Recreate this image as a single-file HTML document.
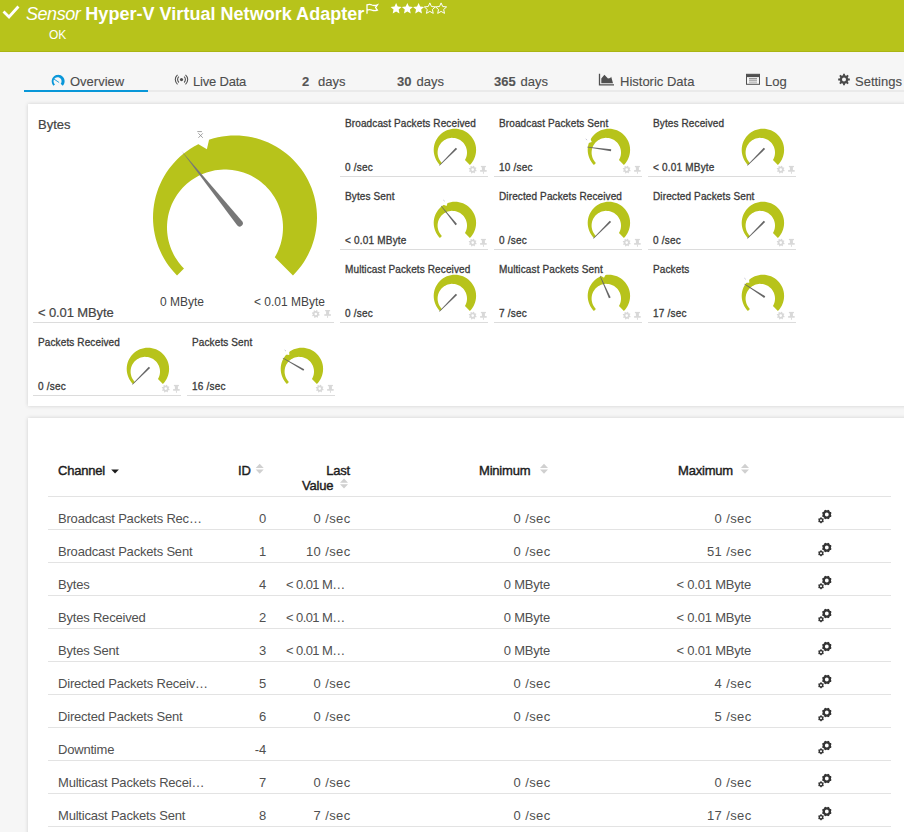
<!DOCTYPE html>
<html><head><meta charset="utf-8">
<style>
*{margin:0;padding:0;box-sizing:border-box}
html,body{width:904px;height:832px;overflow:hidden;background:#f6f6f6;font-family:"Liberation Sans",sans-serif;color:#4a4a4a}
.abs{position:absolute}
#hdr{position:absolute;left:0;top:0;width:904px;height:52px;background:#b7c31b;border-bottom:1px solid #aab514}
#hdr .t{position:absolute;left:26px;top:3px;font-size:18px;color:#fff;white-space:nowrap;line-height:22px}
#hdr .t i{font-style:italic;font-weight:normal;font-size:18px;letter-spacing:-0.45px}
#hdr .t b{font-weight:bold;margin-left:5px;letter-spacing:0.03px}
#hdr .ok{position:absolute;left:49px;top:28px;font-size:12px;color:#fff;line-height:14px}
.tab{position:absolute;top:74px;font-size:13px;color:#4d4d4d;-webkit-text-stroke:0.12px #4d4d4d;line-height:15px;white-space:nowrap}
.tab b{font-weight:bold;color:#555}
#tabline{position:absolute;left:24px;top:90px;width:880px;height:2px;background:#eaeaea}
#tabsel{position:absolute;left:24px;top:90px;width:124px;height:2px;background:#0897d8}
.panel{position:absolute;left:28px;background:#fff;box-shadow:0 0 4px rgba(0,0,0,0.16)}
.gt{position:absolute;font-size:10px;font-weight:normal;-webkit-text-stroke:0.3px #3a3a3a;letter-spacing:0.12px;color:#3a3a3a;line-height:12px;white-space:nowrap}
.gv{position:absolute;font-size:10px;font-weight:normal;-webkit-text-stroke:0.3px #3a3a3a;letter-spacing:0.2px;color:#3a3a3a;line-height:12px;white-space:nowrap}
.th{position:absolute;font-size:13px;font-weight:normal;-webkit-text-stroke:0.4px #1c1c1c;color:#1c1c1c;line-height:15px;white-space:nowrap;letter-spacing:-0.2px}
.td{position:absolute;font-size:13px;color:#505050;line-height:15px;white-space:nowrap;letter-spacing:-0.2px}
.r{text-align:right}
.hl{position:absolute;left:48px;width:843px;height:1px;background:#e3e3e3}
</style></head><body>
<div id="hdr">
 <svg class="abs" style="left:0;top:0" width="904" height="52">
  <path d="M4.5 12.5 L9 17 L17.5 7.5" fill="none" stroke="#fff" stroke-width="2.8" stroke-linecap="square"/>
  <g fill="none" stroke="#fff" stroke-width="1.3">
   <path d="M367 13.8 V4.2 M367 4.9 Q369.8 3.9 372 5 Q374.5 6 377.4 4.9 L375.6 7.6 L377.4 10.1 Q374.5 11.1 372 10.1 Q369.8 9.1 367 10.1"/>
  </g>
  <polygon points="396.10,2.90 394.51,6.52 390.58,6.91 393.53,9.53 392.69,13.39 396.10,11.40 399.51,13.39 398.67,9.53 401.62,6.91 397.69,6.52" fill="#fff"/><polygon points="407.35,2.90 405.76,6.52 401.83,6.91 404.78,9.53 403.94,13.39 407.35,11.40 410.76,13.39 409.92,9.53 412.87,6.91 408.94,6.52" fill="#fff"/><polygon points="418.60,2.90 417.01,6.52 413.08,6.91 416.03,9.53 415.19,13.39 418.60,11.40 422.01,13.39 421.17,9.53 424.12,6.91 420.19,6.52" fill="#fff"/><polygon points="429.85,2.90 428.26,6.52 424.33,6.91 427.28,9.53 426.44,13.39 429.85,11.40 433.26,13.39 432.42,9.53 435.37,6.91 431.44,6.52" fill="none" stroke="#fff" stroke-width="1"/><polygon points="441.10,2.90 439.51,6.52 435.58,6.91 438.53,9.53 437.69,13.39 441.10,11.40 444.51,13.39 443.67,9.53 446.62,6.91 442.69,6.52" fill="none" stroke="#fff" stroke-width="1"/>
 </svg>
 <div class="t"><i>Sensor</i><b>Hyper-V Virtual Network Adapter</b></div>
 <div class="ok">OK</div>
</div>
<div id="tabline"></div><div id="tabsel"></div>
<svg class="abs" style="left:0;top:60px" width="904" height="32">
<g transform="translate(0,-60)">
<path d="M53.59 85.81 L52.93 85.04 L52.40 84.18 L52.02 83.24 L51.78 82.26 L51.70 81.25 L51.78 80.24 L52.02 79.26 L52.40 78.32 L52.93 77.46 L53.59 76.69 L54.36 76.03 L55.22 75.50 L56.16 75.12 L57.14 74.88 L58.15 74.80 L59.16 74.88 L60.14 75.12 L61.08 75.50 L61.94 76.03 L62.71 76.69 L63.37 77.46 L63.90 78.32 L64.28 79.26 L64.52 80.24 L64.60 81.25 L64.52 82.26 L64.28 83.24 L63.90 84.18 L63.37 85.04 L62.71 85.81 L60.66 83.76 L61.02 83.24 L61.29 82.68 L61.46 82.08 L61.54 81.45 L61.53 80.83 L61.41 80.21 L61.20 79.62 L60.90 79.07 L60.52 78.57 L60.06 78.14 L59.54 77.78 L58.98 77.51 L58.38 77.34 L57.75 77.26 L57.13 77.27 L56.51 77.39 L55.92 77.60 L55.37 77.90 L54.87 78.28 L54.44 78.74 L54.08 79.26 L53.81 79.82 L53.64 80.42 L53.56 81.05 L53.57 81.67 L53.69 82.29 L53.90 82.88 L54.20 83.43 L54.58 83.93 L55.04 84.36 Z" fill="#0a97d9"/>
<line x1="54.2" y1="79.2" x2="58.8" y2="82.3" stroke="#0a97d9" stroke-width="0.9" stroke-linecap="round"/>
<circle cx="181.5" cy="79.6" r="1.6" fill="#505050"/>
<g fill="none" stroke="#505050" stroke-width="1.1"><path d="M178.89 76.70 A3.90 3.90 0 0 0 178.89 82.50"/><path d="M184.11 76.70 A3.90 3.90 0 0 1 184.11 82.50"/><path d="M177.51 74.85 A6.20 6.20 0 0 0 177.51 84.35"/><path d="M185.49 74.85 A6.20 6.20 0 0 1 185.49 84.35"/></g>
<path d="M599.5 73.8 V84.9 H614" fill="none" stroke="#505050" stroke-width="1.3"/>
<path d="M601.3 83.2 V78.5 L604.4 74.8 L608 78.5 L610.2 78 L611.2 76.8 L613 83.2 Z" fill="#505050"/>
<rect x="746.5" y="74.3" width="13" height="10" fill="none" stroke="#505050" stroke-width="1"/>
<rect x="746.5" y="74.3" width="13" height="2.8" fill="#505050"/>
<rect x="749" y="78.3" width="8" height="1" fill="#707070"/>
<rect x="749" y="80.3" width="8" height="1" fill="#909090"/>
<rect x="749" y="82.3" width="8" height="1" fill="#b0b0b0"/>

<path d="M842.33 75.47 L843.08 75.23 L843.08 73.67 L844.92 73.67 L844.92 75.23 L845.67 75.47 L846.37 75.83 L847.47 74.73 L848.77 76.03 L847.67 77.13 L848.03 77.83 L848.27 78.58 L849.83 78.58 L849.83 80.42 L848.27 80.42 L848.03 81.17 L847.67 81.87 L848.77 82.97 L847.47 84.27 L846.37 83.17 L845.67 83.53 L844.92 83.77 L844.92 85.33 L843.08 85.33 L843.08 83.77 L842.33 83.53 L841.63 83.17 L840.53 84.27 L839.23 82.97 L840.33 81.87 L839.97 81.17 L839.73 80.42 L838.17 80.42 L838.17 78.58 L839.73 78.58 L839.97 77.83 L840.33 77.13 L839.23 76.03 L840.53 74.73 L841.63 75.83 Z M844.00 79.50 m-2.00 0 a2.00 2.00 0 1 0 4.00 0 a2.00 2.00 0 1 0 -4.00 0Z" fill="#4a4a4a" fill-rule="evenodd"/></g></svg>
<div class="tab" style="left:70px">Overview</div>
<div class="tab" style="left:193px;letter-spacing:-0.2px">Live Data</div>
<div class="tab" style="left:302px"><b>2</b></div><div class="tab" style="left:318px">days</div>
<div class="tab" style="left:397px"><b>30</b></div><div class="tab" style="left:416.5px">days</div>
<div class="tab" style="left:494px"><b>365</b></div><div class="tab" style="left:520.5px">days</div>
<div class="tab" style="left:620px">Historic Data</div>
<div class="tab" style="left:765px">Log</div>
<div class="tab" style="left:855px">Settings</div>

<div class="panel" style="top:104px;width:900px;height:302px"></div>
<div class="panel" style="top:418px;width:900px;height:440px"></div>

<svg class="abs" style="left:0;top:0" width="904" height="832">
<path d="M177.02 275.48 L174.06 272.37 L171.27 269.10 L168.66 265.70 L166.23 262.16 L163.99 258.50 L161.94 254.73 L160.09 250.85 L158.45 246.89 L157.01 242.84 L155.79 238.72 L154.79 234.55 L154.01 230.33 L153.45 226.07 L153.11 221.79 L153.00 217.50 L153.11 213.21 L153.45 208.93 L154.01 204.67 L154.79 200.45 L155.79 196.28 L157.01 192.16 L158.45 188.11 L160.09 184.15 L161.94 180.27 L163.99 176.50 L166.23 172.84 L168.66 169.30 L171.27 165.90 L174.06 162.63 L177.02 159.52 L180.13 156.56 L183.40 153.77 L186.80 151.16 L190.34 148.73 L194.00 146.49 L197.77 144.44 L201.65 142.59 L205.61 140.95 L209.66 139.51 L213.78 138.29 L217.95 137.29 L222.17 136.51 L226.43 135.95 L230.71 135.61 L235.00 135.50 L239.29 135.61 L243.57 135.95 L247.83 136.51 L252.05 137.29 L256.22 138.29 L260.34 139.51 L264.39 140.95 L268.35 142.59 L272.23 144.44 L276.00 146.49 L279.66 148.73 L283.20 151.16 L286.60 153.77 L289.87 156.56 L292.98 159.52 L295.94 162.63 L298.73 165.90 L301.34 169.30 L303.77 172.84 L306.01 176.50 L308.06 180.27 L309.91 184.15 L311.55 188.11 L312.99 192.16 L314.21 196.28 L315.21 200.45 L315.99 204.67 L316.55 208.93 L316.89 213.21 L317.00 217.50 L316.89 221.79 L316.55 226.07 L315.99 230.33 L315.21 234.55 L314.21 238.72 L312.99 242.84 L311.55 246.89 L309.91 250.85 L308.06 254.73 L306.01 258.50 L303.77 262.16 L301.34 265.70 L298.73 269.10 L295.94 272.37 L292.98 275.48 L274.77 257.27 L276.19 254.77 L277.48 252.20 L278.64 249.56 L279.67 246.87 L280.56 244.14 L281.32 241.36 L281.94 238.55 L282.42 235.71 L282.75 232.86 L282.95 229.98 L283.00 227.11 L282.91 224.23 L282.67 221.36 L282.30 218.51 L281.78 215.68 L281.13 212.88 L280.33 210.11 L279.40 207.39 L278.34 204.71 L277.14 202.10 L275.82 199.54 L274.37 197.05 L272.80 194.64 L271.11 192.31 L269.31 190.07 L267.39 187.92 L265.38 185.86 L263.26 183.91 L261.05 182.07 L258.76 180.34 L256.38 178.72 L253.92 177.22 L251.39 175.85 L248.79 174.60 L246.14 173.49 L243.43 172.51 L240.68 171.66 L237.90 170.95 L235.07 170.38 L232.23 169.95 L229.37 169.66 L226.49 169.52 L223.61 169.52 L220.74 169.66 L217.87 169.94 L215.03 170.36 L212.21 170.93 L209.42 171.63 L206.66 172.47 L203.96 173.45 L201.30 174.56 L198.71 175.80 L196.17 177.17 L193.71 178.66 L191.33 180.27 L189.03 182.00 L186.82 183.84 L184.70 185.79 L182.68 187.84 L180.76 189.99 L178.96 192.23 L177.26 194.56 L175.69 196.97 L174.23 199.45 L172.91 202.00 L171.70 204.62 L170.64 207.29 L169.70 210.01 L168.90 212.78 L168.24 215.58 L167.72 218.41 L167.34 221.26 L167.10 224.13 L167.00 227.00 L167.05 229.88 L167.24 232.75 L167.57 235.61 L168.04 238.45 L168.66 241.26 L169.41 244.04 L170.30 246.78 L171.32 249.47 L172.48 252.10 L173.76 254.68 L175.17 257.18 L176.71 259.62 L178.36 261.98 L180.13 264.25 L182.00 266.43 L183.99 268.51 Z" fill="#b7c31b"/>
<polygon points="198.5,144.2 206.9,149.2 209.1,139.6 209.5,130 198,130" fill="#fff"/>
<line x1="197.3" y1="131.6" x2="201.9" y2="131.6" stroke="#8a8a8a" stroke-width="0.8"/><path d="M198.4 133.3 L202.8 137.8 M202.8 133.3 L198.4 137.8" stroke="#8a8a8a" stroke-width="0.8"/>
<path d="M181.23 150.38 L242.12 221.27 A3.20 3.20 0 0 1 237.13 225.28 Z" fill="#777777"/>
<path d="M439.91 164.94 L438.51 163.40 L437.27 161.73 L436.20 159.94 L435.31 158.06 L434.61 156.10 L434.11 154.09 L433.80 152.03 L433.70 149.95 L433.80 147.87 L434.11 145.81 L434.61 143.80 L435.31 141.84 L436.20 139.96 L437.27 138.17 L438.51 136.50 L439.91 134.96 L441.45 133.56 L443.12 132.32 L444.91 131.25 L446.79 130.36 L448.75 129.66 L450.76 129.16 L452.82 128.85 L454.90 128.75 L456.98 128.85 L459.04 129.16 L461.05 129.66 L463.01 130.36 L464.89 131.25 L466.68 132.32 L468.35 133.56 L469.89 134.96 L471.29 136.50 L472.53 138.17 L473.60 139.96 L474.49 141.84 L475.19 143.80 L475.69 145.81 L476.00 147.87 L476.10 149.95 L476.00 152.03 L475.69 154.09 L475.19 156.10 L474.49 158.06 L473.60 159.94 L472.53 161.73 L471.29 163.40 L469.89 164.94 L464.96 160.01 L465.60 158.81 L466.13 157.55 L466.53 156.24 L466.81 154.91 L466.97 153.55 L467.00 152.18 L466.90 150.82 L466.67 149.48 L466.33 148.16 L465.86 146.87 L465.27 145.64 L464.58 144.47 L463.77 143.36 L462.87 142.34 L461.88 141.40 L460.80 140.56 L459.65 139.82 L458.44 139.19 L457.18 138.68 L455.87 138.29 L454.53 138.02 L453.17 137.88 L451.81 137.86 L450.45 137.97 L449.10 138.20 L447.78 138.56 L446.51 139.04 L445.28 139.64 L444.11 140.34 L443.01 141.16 L442.00 142.07 L441.07 143.07 L440.24 144.15 L439.51 145.31 L438.89 146.52 L438.39 147.79 L438.01 149.10 L437.75 150.45 L437.62 151.80 L437.61 153.17 L437.73 154.53 L437.98 155.87 L438.35 157.19 L438.84 158.46 L439.45 159.68 L440.16 160.85 L440.99 161.94 L441.91 162.94 Z" fill="#b7c31b"/>
<polygon points="439.17,165.33 455.78,147.72 457.13,149.07 439.52,165.68" fill="#666666"/>
<path d="M475.70 169.60 L476.62 170.38 L476.40 171.13 L475.19 171.27 L474.82 171.72 L474.92 172.93 L474.23 173.30 L473.29 172.54 L472.70 172.60 L471.92 173.52 L471.17 173.30 L471.03 172.09 L470.58 171.72 L469.37 171.82 L469.00 171.13 L469.76 170.19 L469.70 169.60 L468.78 168.82 L469.00 168.07 L470.21 167.93 L470.58 167.48 L470.48 166.27 L471.17 165.90 L472.11 166.66 L472.70 166.60 L473.48 165.68 L474.23 165.90 L474.37 167.11 L474.82 167.48 L476.03 167.38 L476.40 168.07 L475.64 169.01 Z M472.70 169.60 m-1.3 0 a1.3 1.3 0 1 0 2.6 0 a1.3 1.3 0 1 0 -2.6 0Z" fill="#d8d8d8" fill-rule="evenodd"/>
<g fill="#d8d8d8"><rect x="480.90" y="165.90" width="5" height="1.3"/><rect x="481.90" y="166.90" width="3" height="4"/><rect x="480.10" y="170.10" width="6.6" height="1.6"/><rect x="482.95" y="171.50" width="0.9" height="2.3"/></g>
<rect x="340" y="176" width="148" height="1" fill="#dcdcdc"/>
<path d="M593.91 164.94 L592.51 163.40 L591.27 161.73 L590.20 159.94 L589.31 158.06 L588.61 156.10 L588.11 154.09 L587.80 152.03 L587.70 149.95 L587.80 147.87 L588.11 145.81 L588.61 143.80 L589.31 141.84 L590.20 139.96 L591.27 138.17 L592.51 136.50 L593.91 134.96 L595.45 133.56 L597.12 132.32 L598.91 131.25 L600.79 130.36 L602.75 129.66 L604.76 129.16 L606.82 128.85 L608.90 128.75 L610.98 128.85 L613.04 129.16 L615.05 129.66 L617.01 130.36 L618.89 131.25 L620.68 132.32 L622.35 133.56 L623.89 134.96 L625.29 136.50 L626.53 138.17 L627.60 139.96 L628.49 141.84 L629.19 143.80 L629.69 145.81 L630.00 147.87 L630.10 149.95 L630.00 152.03 L629.69 154.09 L629.19 156.10 L628.49 158.06 L627.60 159.94 L626.53 161.73 L625.29 163.40 L623.89 164.94 L618.96 160.01 L619.60 158.81 L620.13 157.55 L620.53 156.24 L620.81 154.91 L620.97 153.55 L621.00 152.18 L620.90 150.82 L620.67 149.48 L620.33 148.16 L619.86 146.87 L619.27 145.64 L618.58 144.47 L617.77 143.36 L616.87 142.34 L615.88 141.40 L614.80 140.56 L613.65 139.82 L612.44 139.19 L611.18 138.68 L609.87 138.29 L608.53 138.02 L607.17 137.88 L605.81 137.86 L604.45 137.97 L603.10 138.20 L601.78 138.56 L600.51 139.04 L599.28 139.64 L598.11 140.34 L597.01 141.16 L596.00 142.07 L595.07 143.07 L594.24 144.15 L593.51 145.31 L592.89 146.52 L592.39 147.79 L592.01 149.10 L591.75 150.45 L591.62 151.80 L591.61 153.17 L591.73 154.53 L591.98 155.87 L592.35 157.19 L592.84 158.46 L593.45 159.68 L594.16 160.85 L594.99 161.94 L595.91 162.94 Z" fill="#b7c31b"/>
<polygon points="588.57,142.95 591.77,141.96 590.47,138.88 588.16,137.49 586.02,142.07" fill="#fff"/>
<path d="M585.72 138.87 l1.4 1.2" stroke="#b8b8c8" stroke-width="0.8"/>
<polygon points="587.12,146.83 611.21,149.30 610.96,151.18 587.06,147.33" fill="#666666"/>
<path d="M629.70 169.60 L630.62 170.38 L630.40 171.13 L629.19 171.27 L628.82 171.72 L628.92 172.93 L628.23 173.30 L627.29 172.54 L626.70 172.60 L625.92 173.52 L625.17 173.30 L625.03 172.09 L624.58 171.72 L623.37 171.82 L623.00 171.13 L623.76 170.19 L623.70 169.60 L622.78 168.82 L623.00 168.07 L624.21 167.93 L624.58 167.48 L624.48 166.27 L625.17 165.90 L626.11 166.66 L626.70 166.60 L627.48 165.68 L628.23 165.90 L628.37 167.11 L628.82 167.48 L630.03 167.38 L630.40 168.07 L629.64 169.01 Z M626.70 169.60 m-1.3 0 a1.3 1.3 0 1 0 2.6 0 a1.3 1.3 0 1 0 -2.6 0Z" fill="#d8d8d8" fill-rule="evenodd"/>
<g fill="#d8d8d8"><rect x="634.90" y="165.90" width="5" height="1.3"/><rect x="635.90" y="166.90" width="3" height="4"/><rect x="634.10" y="170.10" width="6.6" height="1.6"/><rect x="636.95" y="171.50" width="0.9" height="2.3"/></g>
<rect x="494" y="176" width="148" height="1" fill="#dcdcdc"/>
<path d="M747.91 164.94 L746.51 163.40 L745.27 161.73 L744.20 159.94 L743.31 158.06 L742.61 156.10 L742.11 154.09 L741.80 152.03 L741.70 149.95 L741.80 147.87 L742.11 145.81 L742.61 143.80 L743.31 141.84 L744.20 139.96 L745.27 138.17 L746.51 136.50 L747.91 134.96 L749.45 133.56 L751.12 132.32 L752.91 131.25 L754.79 130.36 L756.75 129.66 L758.76 129.16 L760.82 128.85 L762.90 128.75 L764.98 128.85 L767.04 129.16 L769.05 129.66 L771.01 130.36 L772.89 131.25 L774.68 132.32 L776.35 133.56 L777.89 134.96 L779.29 136.50 L780.53 138.17 L781.60 139.96 L782.49 141.84 L783.19 143.80 L783.69 145.81 L784.00 147.87 L784.10 149.95 L784.00 152.03 L783.69 154.09 L783.19 156.10 L782.49 158.06 L781.60 159.94 L780.53 161.73 L779.29 163.40 L777.89 164.94 L772.96 160.01 L773.60 158.81 L774.13 157.55 L774.53 156.24 L774.81 154.91 L774.97 153.55 L775.00 152.18 L774.90 150.82 L774.67 149.48 L774.33 148.16 L773.86 146.87 L773.27 145.64 L772.58 144.47 L771.77 143.36 L770.87 142.34 L769.88 141.40 L768.80 140.56 L767.65 139.82 L766.44 139.19 L765.18 138.68 L763.87 138.29 L762.53 138.02 L761.17 137.88 L759.81 137.86 L758.45 137.97 L757.10 138.20 L755.78 138.56 L754.51 139.04 L753.28 139.64 L752.11 140.34 L751.01 141.16 L750.00 142.07 L749.07 143.07 L748.24 144.15 L747.51 145.31 L746.89 146.52 L746.39 147.79 L746.01 149.10 L745.75 150.45 L745.62 151.80 L745.61 153.17 L745.73 154.53 L745.98 155.87 L746.35 157.19 L746.84 158.46 L747.45 159.68 L748.16 160.85 L748.99 161.94 L749.91 162.94 Z" fill="#b7c31b"/>
<polygon points="747.17,165.33 763.78,147.72 765.13,149.07 747.52,165.68" fill="#666666"/>
<path d="M783.70 169.60 L784.62 170.38 L784.40 171.13 L783.19 171.27 L782.82 171.72 L782.92 172.93 L782.23 173.30 L781.29 172.54 L780.70 172.60 L779.92 173.52 L779.17 173.30 L779.03 172.09 L778.58 171.72 L777.37 171.82 L777.00 171.13 L777.76 170.19 L777.70 169.60 L776.78 168.82 L777.00 168.07 L778.21 167.93 L778.58 167.48 L778.48 166.27 L779.17 165.90 L780.11 166.66 L780.70 166.60 L781.48 165.68 L782.23 165.90 L782.37 167.11 L782.82 167.48 L784.03 167.38 L784.40 168.07 L783.64 169.01 Z M780.70 169.60 m-1.3 0 a1.3 1.3 0 1 0 2.6 0 a1.3 1.3 0 1 0 -2.6 0Z" fill="#d8d8d8" fill-rule="evenodd"/>
<g fill="#d8d8d8"><rect x="788.90" y="165.90" width="5" height="1.3"/><rect x="789.90" y="166.90" width="3" height="4"/><rect x="788.10" y="170.10" width="6.6" height="1.6"/><rect x="790.95" y="171.50" width="0.9" height="2.3"/></g>
<rect x="648" y="176" width="148" height="1" fill="#dcdcdc"/>
<path d="M439.91 237.94 L438.51 236.40 L437.27 234.73 L436.20 232.94 L435.31 231.06 L434.61 229.10 L434.11 227.09 L433.80 225.03 L433.70 222.95 L433.80 220.87 L434.11 218.81 L434.61 216.80 L435.31 214.84 L436.20 212.96 L437.27 211.17 L438.51 209.50 L439.91 207.96 L441.45 206.56 L443.12 205.32 L444.91 204.25 L446.79 203.36 L448.75 202.66 L450.76 202.16 L452.82 201.85 L454.90 201.75 L456.98 201.85 L459.04 202.16 L461.05 202.66 L463.01 203.36 L464.89 204.25 L466.68 205.32 L468.35 206.56 L469.89 207.96 L471.29 209.50 L472.53 211.17 L473.60 212.96 L474.49 214.84 L475.19 216.80 L475.69 218.81 L476.00 220.87 L476.10 222.95 L476.00 225.03 L475.69 227.09 L475.19 229.10 L474.49 231.06 L473.60 232.94 L472.53 234.73 L471.29 236.40 L469.89 237.94 L464.96 233.01 L465.60 231.81 L466.13 230.55 L466.53 229.24 L466.81 227.91 L466.97 226.55 L467.00 225.18 L466.90 223.82 L466.67 222.48 L466.33 221.16 L465.86 219.87 L465.27 218.64 L464.58 217.47 L463.77 216.36 L462.87 215.34 L461.88 214.40 L460.80 213.56 L459.65 212.82 L458.44 212.19 L457.18 211.68 L455.87 211.29 L454.53 211.02 L453.17 210.88 L451.81 210.86 L450.45 210.97 L449.10 211.20 L447.78 211.56 L446.51 212.04 L445.28 212.64 L444.11 213.34 L443.01 214.16 L442.00 215.07 L441.07 216.07 L440.24 217.15 L439.51 218.31 L438.89 219.52 L438.39 220.79 L438.01 222.10 L437.75 223.45 L437.62 224.80 L437.61 226.17 L437.73 227.53 L437.98 228.87 L438.35 230.19 L438.84 231.46 L439.45 232.68 L440.16 233.85 L440.99 234.94 L441.91 235.94 Z" fill="#b7c31b"/>
<polygon points="443.51,204.72 446.61,205.96 447.55,202.75 446.62,200.21 442.08,202.43" fill="#fff"/>
<path d="M443.33 200.06 l1.4 1.2" stroke="#b8b8c8" stroke-width="0.8"/>
<polygon points="441.28,205.67 457.02,224.07 455.54,225.26 440.89,205.99" fill="#666666"/>
<path d="M475.70 242.60 L476.62 243.38 L476.40 244.13 L475.19 244.27 L474.82 244.72 L474.92 245.93 L474.23 246.30 L473.29 245.54 L472.70 245.60 L471.92 246.52 L471.17 246.30 L471.03 245.09 L470.58 244.72 L469.37 244.82 L469.00 244.13 L469.76 243.19 L469.70 242.60 L468.78 241.82 L469.00 241.07 L470.21 240.93 L470.58 240.48 L470.48 239.27 L471.17 238.90 L472.11 239.66 L472.70 239.60 L473.48 238.68 L474.23 238.90 L474.37 240.11 L474.82 240.48 L476.03 240.38 L476.40 241.07 L475.64 242.01 Z M472.70 242.60 m-1.3 0 a1.3 1.3 0 1 0 2.6 0 a1.3 1.3 0 1 0 -2.6 0Z" fill="#d8d8d8" fill-rule="evenodd"/>
<g fill="#d8d8d8"><rect x="480.90" y="238.90" width="5" height="1.3"/><rect x="481.90" y="239.90" width="3" height="4"/><rect x="480.10" y="243.10" width="6.6" height="1.6"/><rect x="482.95" y="244.50" width="0.9" height="2.3"/></g>
<rect x="340" y="249" width="148" height="1" fill="#dcdcdc"/>
<path d="M593.91 237.94 L592.51 236.40 L591.27 234.73 L590.20 232.94 L589.31 231.06 L588.61 229.10 L588.11 227.09 L587.80 225.03 L587.70 222.95 L587.80 220.87 L588.11 218.81 L588.61 216.80 L589.31 214.84 L590.20 212.96 L591.27 211.17 L592.51 209.50 L593.91 207.96 L595.45 206.56 L597.12 205.32 L598.91 204.25 L600.79 203.36 L602.75 202.66 L604.76 202.16 L606.82 201.85 L608.90 201.75 L610.98 201.85 L613.04 202.16 L615.05 202.66 L617.01 203.36 L618.89 204.25 L620.68 205.32 L622.35 206.56 L623.89 207.96 L625.29 209.50 L626.53 211.17 L627.60 212.96 L628.49 214.84 L629.19 216.80 L629.69 218.81 L630.00 220.87 L630.10 222.95 L630.00 225.03 L629.69 227.09 L629.19 229.10 L628.49 231.06 L627.60 232.94 L626.53 234.73 L625.29 236.40 L623.89 237.94 L618.96 233.01 L619.60 231.81 L620.13 230.55 L620.53 229.24 L620.81 227.91 L620.97 226.55 L621.00 225.18 L620.90 223.82 L620.67 222.48 L620.33 221.16 L619.86 219.87 L619.27 218.64 L618.58 217.47 L617.77 216.36 L616.87 215.34 L615.88 214.40 L614.80 213.56 L613.65 212.82 L612.44 212.19 L611.18 211.68 L609.87 211.29 L608.53 211.02 L607.17 210.88 L605.81 210.86 L604.45 210.97 L603.10 211.20 L601.78 211.56 L600.51 212.04 L599.28 212.64 L598.11 213.34 L597.01 214.16 L596.00 215.07 L595.07 216.07 L594.24 217.15 L593.51 218.31 L592.89 219.52 L592.39 220.79 L592.01 222.10 L591.75 223.45 L591.62 224.80 L591.61 226.17 L591.73 227.53 L591.98 228.87 L592.35 230.19 L592.84 231.46 L593.45 232.68 L594.16 233.85 L594.99 234.94 L595.91 235.94 Z" fill="#b7c31b"/>
<polygon points="593.17,238.33 609.78,220.72 611.13,222.07 593.52,238.68" fill="#666666"/>
<path d="M629.70 242.60 L630.62 243.38 L630.40 244.13 L629.19 244.27 L628.82 244.72 L628.92 245.93 L628.23 246.30 L627.29 245.54 L626.70 245.60 L625.92 246.52 L625.17 246.30 L625.03 245.09 L624.58 244.72 L623.37 244.82 L623.00 244.13 L623.76 243.19 L623.70 242.60 L622.78 241.82 L623.00 241.07 L624.21 240.93 L624.58 240.48 L624.48 239.27 L625.17 238.90 L626.11 239.66 L626.70 239.60 L627.48 238.68 L628.23 238.90 L628.37 240.11 L628.82 240.48 L630.03 240.38 L630.40 241.07 L629.64 242.01 Z M626.70 242.60 m-1.3 0 a1.3 1.3 0 1 0 2.6 0 a1.3 1.3 0 1 0 -2.6 0Z" fill="#d8d8d8" fill-rule="evenodd"/>
<g fill="#d8d8d8"><rect x="634.90" y="238.90" width="5" height="1.3"/><rect x="635.90" y="239.90" width="3" height="4"/><rect x="634.10" y="243.10" width="6.6" height="1.6"/><rect x="636.95" y="244.50" width="0.9" height="2.3"/></g>
<rect x="494" y="249" width="148" height="1" fill="#dcdcdc"/>
<path d="M747.91 237.94 L746.51 236.40 L745.27 234.73 L744.20 232.94 L743.31 231.06 L742.61 229.10 L742.11 227.09 L741.80 225.03 L741.70 222.95 L741.80 220.87 L742.11 218.81 L742.61 216.80 L743.31 214.84 L744.20 212.96 L745.27 211.17 L746.51 209.50 L747.91 207.96 L749.45 206.56 L751.12 205.32 L752.91 204.25 L754.79 203.36 L756.75 202.66 L758.76 202.16 L760.82 201.85 L762.90 201.75 L764.98 201.85 L767.04 202.16 L769.05 202.66 L771.01 203.36 L772.89 204.25 L774.68 205.32 L776.35 206.56 L777.89 207.96 L779.29 209.50 L780.53 211.17 L781.60 212.96 L782.49 214.84 L783.19 216.80 L783.69 218.81 L784.00 220.87 L784.10 222.95 L784.00 225.03 L783.69 227.09 L783.19 229.10 L782.49 231.06 L781.60 232.94 L780.53 234.73 L779.29 236.40 L777.89 237.94 L772.96 233.01 L773.60 231.81 L774.13 230.55 L774.53 229.24 L774.81 227.91 L774.97 226.55 L775.00 225.18 L774.90 223.82 L774.67 222.48 L774.33 221.16 L773.86 219.87 L773.27 218.64 L772.58 217.47 L771.77 216.36 L770.87 215.34 L769.88 214.40 L768.80 213.56 L767.65 212.82 L766.44 212.19 L765.18 211.68 L763.87 211.29 L762.53 211.02 L761.17 210.88 L759.81 210.86 L758.45 210.97 L757.10 211.20 L755.78 211.56 L754.51 212.04 L753.28 212.64 L752.11 213.34 L751.01 214.16 L750.00 215.07 L749.07 216.07 L748.24 217.15 L747.51 218.31 L746.89 219.52 L746.39 220.79 L746.01 222.10 L745.75 223.45 L745.62 224.80 L745.61 226.17 L745.73 227.53 L745.98 228.87 L746.35 230.19 L746.84 231.46 L747.45 232.68 L748.16 233.85 L748.99 234.94 L749.91 235.94 Z" fill="#b7c31b"/>
<polygon points="747.17,238.33 763.78,220.72 765.13,222.07 747.52,238.68" fill="#666666"/>
<path d="M783.70 242.60 L784.62 243.38 L784.40 244.13 L783.19 244.27 L782.82 244.72 L782.92 245.93 L782.23 246.30 L781.29 245.54 L780.70 245.60 L779.92 246.52 L779.17 246.30 L779.03 245.09 L778.58 244.72 L777.37 244.82 L777.00 244.13 L777.76 243.19 L777.70 242.60 L776.78 241.82 L777.00 241.07 L778.21 240.93 L778.58 240.48 L778.48 239.27 L779.17 238.90 L780.11 239.66 L780.70 239.60 L781.48 238.68 L782.23 238.90 L782.37 240.11 L782.82 240.48 L784.03 240.38 L784.40 241.07 L783.64 242.01 Z M780.70 242.60 m-1.3 0 a1.3 1.3 0 1 0 2.6 0 a1.3 1.3 0 1 0 -2.6 0Z" fill="#d8d8d8" fill-rule="evenodd"/>
<g fill="#d8d8d8"><rect x="788.90" y="238.90" width="5" height="1.3"/><rect x="789.90" y="239.90" width="3" height="4"/><rect x="788.10" y="243.10" width="6.6" height="1.6"/><rect x="790.95" y="244.50" width="0.9" height="2.3"/></g>
<rect x="648" y="249" width="148" height="1" fill="#dcdcdc"/>
<path d="M439.91 310.94 L438.51 309.40 L437.27 307.73 L436.20 305.94 L435.31 304.06 L434.61 302.10 L434.11 300.09 L433.80 298.03 L433.70 295.95 L433.80 293.87 L434.11 291.81 L434.61 289.80 L435.31 287.84 L436.20 285.96 L437.27 284.17 L438.51 282.50 L439.91 280.96 L441.45 279.56 L443.12 278.32 L444.91 277.25 L446.79 276.36 L448.75 275.66 L450.76 275.16 L452.82 274.85 L454.90 274.75 L456.98 274.85 L459.04 275.16 L461.05 275.66 L463.01 276.36 L464.89 277.25 L466.68 278.32 L468.35 279.56 L469.89 280.96 L471.29 282.50 L472.53 284.17 L473.60 285.96 L474.49 287.84 L475.19 289.80 L475.69 291.81 L476.00 293.87 L476.10 295.95 L476.00 298.03 L475.69 300.09 L475.19 302.10 L474.49 304.06 L473.60 305.94 L472.53 307.73 L471.29 309.40 L469.89 310.94 L464.96 306.01 L465.60 304.81 L466.13 303.55 L466.53 302.24 L466.81 300.91 L466.97 299.55 L467.00 298.18 L466.90 296.82 L466.67 295.48 L466.33 294.16 L465.86 292.87 L465.27 291.64 L464.58 290.47 L463.77 289.36 L462.87 288.34 L461.88 287.40 L460.80 286.56 L459.65 285.82 L458.44 285.19 L457.18 284.68 L455.87 284.29 L454.53 284.02 L453.17 283.88 L451.81 283.86 L450.45 283.97 L449.10 284.20 L447.78 284.56 L446.51 285.04 L445.28 285.64 L444.11 286.34 L443.01 287.16 L442.00 288.07 L441.07 289.07 L440.24 290.15 L439.51 291.31 L438.89 292.52 L438.39 293.79 L438.01 295.10 L437.75 296.45 L437.62 297.80 L437.61 299.17 L437.73 300.53 L437.98 301.87 L438.35 303.19 L438.84 304.46 L439.45 305.68 L440.16 306.85 L440.99 307.94 L441.91 308.94 Z" fill="#b7c31b"/>
<polygon points="439.17,311.33 455.78,293.72 457.13,295.07 439.52,311.68" fill="#666666"/>
<path d="M475.70 315.60 L476.62 316.38 L476.40 317.13 L475.19 317.27 L474.82 317.72 L474.92 318.93 L474.23 319.30 L473.29 318.54 L472.70 318.60 L471.92 319.52 L471.17 319.30 L471.03 318.09 L470.58 317.72 L469.37 317.82 L469.00 317.13 L469.76 316.19 L469.70 315.60 L468.78 314.82 L469.00 314.07 L470.21 313.93 L470.58 313.48 L470.48 312.27 L471.17 311.90 L472.11 312.66 L472.70 312.60 L473.48 311.68 L474.23 311.90 L474.37 313.11 L474.82 313.48 L476.03 313.38 L476.40 314.07 L475.64 315.01 Z M472.70 315.60 m-1.3 0 a1.3 1.3 0 1 0 2.6 0 a1.3 1.3 0 1 0 -2.6 0Z" fill="#d8d8d8" fill-rule="evenodd"/>
<g fill="#d8d8d8"><rect x="480.90" y="311.90" width="5" height="1.3"/><rect x="481.90" y="312.90" width="3" height="4"/><rect x="480.10" y="316.10" width="6.6" height="1.6"/><rect x="482.95" y="317.50" width="0.9" height="2.3"/></g>
<rect x="340" y="322" width="148" height="1" fill="#dcdcdc"/>
<path d="M593.91 310.94 L592.51 309.40 L591.27 307.73 L590.20 305.94 L589.31 304.06 L588.61 302.10 L588.11 300.09 L587.80 298.03 L587.70 295.95 L587.80 293.87 L588.11 291.81 L588.61 289.80 L589.31 287.84 L590.20 285.96 L591.27 284.17 L592.51 282.50 L593.91 280.96 L595.45 279.56 L597.12 278.32 L598.91 277.25 L600.79 276.36 L602.75 275.66 L604.76 275.16 L606.82 274.85 L608.90 274.75 L610.98 274.85 L613.04 275.16 L615.05 275.66 L617.01 276.36 L618.89 277.25 L620.68 278.32 L622.35 279.56 L623.89 280.96 L625.29 282.50 L626.53 284.17 L627.60 285.96 L628.49 287.84 L629.19 289.80 L629.69 291.81 L630.00 293.87 L630.10 295.95 L630.00 298.03 L629.69 300.09 L629.19 302.10 L628.49 304.06 L627.60 305.94 L626.53 307.73 L625.29 309.40 L623.89 310.94 L618.96 306.01 L619.60 304.81 L620.13 303.55 L620.53 302.24 L620.81 300.91 L620.97 299.55 L621.00 298.18 L620.90 296.82 L620.67 295.48 L620.33 294.16 L619.86 292.87 L619.27 291.64 L618.58 290.47 L617.77 289.36 L616.87 288.34 L615.88 287.40 L614.80 286.56 L613.65 285.82 L612.44 285.19 L611.18 284.68 L609.87 284.29 L608.53 284.02 L607.17 283.88 L605.81 283.86 L604.45 283.97 L603.10 284.20 L601.78 284.56 L600.51 285.04 L599.28 285.64 L598.11 286.34 L597.01 287.16 L596.00 288.07 L595.07 289.07 L594.24 290.15 L593.51 291.31 L592.89 292.52 L592.39 293.79 L592.01 295.10 L591.75 296.45 L591.62 297.80 L591.61 299.17 L591.73 300.53 L591.98 301.87 L592.35 303.19 L592.84 304.46 L593.45 305.68 L594.16 306.85 L594.99 307.94 L595.91 308.94 Z" fill="#b7c31b"/>
<polygon points="601.20,275.88 604.01,277.69 605.54,274.71 605.11,272.05 600.23,273.36" fill="#fff"/>
<path d="M601.78 271.40 l1.4 1.2" stroke="#b8b8c8" stroke-width="0.8"/>
<polygon points="600.29,275.70 610.65,297.58 608.91,298.35 599.83,275.91" fill="#666666"/>
<path d="M629.70 315.60 L630.62 316.38 L630.40 317.13 L629.19 317.27 L628.82 317.72 L628.92 318.93 L628.23 319.30 L627.29 318.54 L626.70 318.60 L625.92 319.52 L625.17 319.30 L625.03 318.09 L624.58 317.72 L623.37 317.82 L623.00 317.13 L623.76 316.19 L623.70 315.60 L622.78 314.82 L623.00 314.07 L624.21 313.93 L624.58 313.48 L624.48 312.27 L625.17 311.90 L626.11 312.66 L626.70 312.60 L627.48 311.68 L628.23 311.90 L628.37 313.11 L628.82 313.48 L630.03 313.38 L630.40 314.07 L629.64 315.01 Z M626.70 315.60 m-1.3 0 a1.3 1.3 0 1 0 2.6 0 a1.3 1.3 0 1 0 -2.6 0Z" fill="#d8d8d8" fill-rule="evenodd"/>
<g fill="#d8d8d8"><rect x="634.90" y="311.90" width="5" height="1.3"/><rect x="635.90" y="312.90" width="3" height="4"/><rect x="634.10" y="316.10" width="6.6" height="1.6"/><rect x="636.95" y="317.50" width="0.9" height="2.3"/></g>
<rect x="494" y="322" width="148" height="1" fill="#dcdcdc"/>
<path d="M747.91 310.94 L746.51 309.40 L745.27 307.73 L744.20 305.94 L743.31 304.06 L742.61 302.10 L742.11 300.09 L741.80 298.03 L741.70 295.95 L741.80 293.87 L742.11 291.81 L742.61 289.80 L743.31 287.84 L744.20 285.96 L745.27 284.17 L746.51 282.50 L747.91 280.96 L749.45 279.56 L751.12 278.32 L752.91 277.25 L754.79 276.36 L756.75 275.66 L758.76 275.16 L760.82 274.85 L762.90 274.75 L764.98 274.85 L767.04 275.16 L769.05 275.66 L771.01 276.36 L772.89 277.25 L774.68 278.32 L776.35 279.56 L777.89 280.96 L779.29 282.50 L780.53 284.17 L781.60 285.96 L782.49 287.84 L783.19 289.80 L783.69 291.81 L784.00 293.87 L784.10 295.95 L784.00 298.03 L783.69 300.09 L783.19 302.10 L782.49 304.06 L781.60 305.94 L780.53 307.73 L779.29 309.40 L777.89 310.94 L772.96 306.01 L773.60 304.81 L774.13 303.55 L774.53 302.24 L774.81 300.91 L774.97 299.55 L775.00 298.18 L774.90 296.82 L774.67 295.48 L774.33 294.16 L773.86 292.87 L773.27 291.64 L772.58 290.47 L771.77 289.36 L770.87 288.34 L769.88 287.40 L768.80 286.56 L767.65 285.82 L766.44 285.19 L765.18 284.68 L763.87 284.29 L762.53 284.02 L761.17 283.88 L759.81 283.86 L758.45 283.97 L757.10 284.20 L755.78 284.56 L754.51 285.04 L753.28 285.64 L752.11 286.34 L751.01 287.16 L750.00 288.07 L749.07 289.07 L748.24 290.15 L747.51 291.31 L746.89 292.52 L746.39 293.79 L746.01 295.10 L745.75 296.45 L745.62 297.80 L745.61 299.17 L745.73 300.53 L745.98 301.87 L746.35 303.19 L746.84 304.46 L747.45 305.68 L748.16 306.85 L748.99 307.94 L749.91 308.94 Z" fill="#b7c31b"/>
<polygon points="745.96,282.71 749.30,282.82 749.08,279.48 747.34,277.41 743.83,281.05" fill="#fff"/>
<path d="M744.36 278.12 l1.4 1.2" stroke="#b8b8c8" stroke-width="0.8"/>
<polygon points="744.61,283.73 765.26,296.36 764.22,297.95 744.33,284.15" fill="#666666"/>
<path d="M783.70 315.60 L784.62 316.38 L784.40 317.13 L783.19 317.27 L782.82 317.72 L782.92 318.93 L782.23 319.30 L781.29 318.54 L780.70 318.60 L779.92 319.52 L779.17 319.30 L779.03 318.09 L778.58 317.72 L777.37 317.82 L777.00 317.13 L777.76 316.19 L777.70 315.60 L776.78 314.82 L777.00 314.07 L778.21 313.93 L778.58 313.48 L778.48 312.27 L779.17 311.90 L780.11 312.66 L780.70 312.60 L781.48 311.68 L782.23 311.90 L782.37 313.11 L782.82 313.48 L784.03 313.38 L784.40 314.07 L783.64 315.01 Z M780.70 315.60 m-1.3 0 a1.3 1.3 0 1 0 2.6 0 a1.3 1.3 0 1 0 -2.6 0Z" fill="#d8d8d8" fill-rule="evenodd"/>
<g fill="#d8d8d8"><rect x="788.90" y="311.90" width="5" height="1.3"/><rect x="789.90" y="312.90" width="3" height="4"/><rect x="788.10" y="316.10" width="6.6" height="1.6"/><rect x="790.95" y="317.50" width="0.9" height="2.3"/></g>
<rect x="648" y="322" width="148" height="1" fill="#dcdcdc"/>
<path d="M132.91 383.94 L131.51 382.40 L130.27 380.73 L129.20 378.94 L128.31 377.06 L127.61 375.10 L127.11 373.09 L126.80 371.03 L126.70 368.95 L126.80 366.87 L127.11 364.81 L127.61 362.80 L128.31 360.84 L129.20 358.96 L130.27 357.17 L131.51 355.50 L132.91 353.96 L134.45 352.56 L136.12 351.32 L137.91 350.25 L139.79 349.36 L141.75 348.66 L143.76 348.16 L145.82 347.85 L147.90 347.75 L149.98 347.85 L152.04 348.16 L154.05 348.66 L156.01 349.36 L157.89 350.25 L159.68 351.32 L161.35 352.56 L162.89 353.96 L164.29 355.50 L165.53 357.17 L166.60 358.96 L167.49 360.84 L168.19 362.80 L168.69 364.81 L169.00 366.87 L169.10 368.95 L169.00 371.03 L168.69 373.09 L168.19 375.10 L167.49 377.06 L166.60 378.94 L165.53 380.73 L164.29 382.40 L162.89 383.94 L157.96 379.01 L158.60 377.81 L159.13 376.55 L159.53 375.24 L159.81 373.91 L159.97 372.55 L160.00 371.18 L159.90 369.82 L159.67 368.48 L159.33 367.16 L158.86 365.87 L158.27 364.64 L157.58 363.47 L156.77 362.36 L155.87 361.34 L154.88 360.40 L153.80 359.56 L152.65 358.82 L151.44 358.19 L150.18 357.68 L148.87 357.29 L147.53 357.02 L146.17 356.88 L144.81 356.86 L143.45 356.97 L142.10 357.20 L140.78 357.56 L139.51 358.04 L138.28 358.64 L137.11 359.34 L136.01 360.16 L135.00 361.07 L134.07 362.07 L133.24 363.15 L132.51 364.31 L131.89 365.52 L131.39 366.79 L131.01 368.10 L130.75 369.45 L130.62 370.80 L130.61 372.17 L130.73 373.53 L130.98 374.87 L131.35 376.19 L131.84 377.46 L132.45 378.68 L133.16 379.85 L133.99 380.94 L134.91 381.94 Z" fill="#b7c31b"/>
<polygon points="132.17,384.33 148.78,366.72 150.13,368.07 132.52,384.68" fill="#666666"/>
<path d="M168.70 388.60 L169.62 389.38 L169.40 390.13 L168.19 390.27 L167.82 390.72 L167.92 391.93 L167.23 392.30 L166.29 391.54 L165.70 391.60 L164.92 392.52 L164.17 392.30 L164.03 391.09 L163.58 390.72 L162.37 390.82 L162.00 390.13 L162.76 389.19 L162.70 388.60 L161.78 387.82 L162.00 387.07 L163.21 386.93 L163.58 386.48 L163.48 385.27 L164.17 384.90 L165.11 385.66 L165.70 385.60 L166.48 384.68 L167.23 384.90 L167.37 386.11 L167.82 386.48 L169.03 386.38 L169.40 387.07 L168.64 388.01 Z M165.70 388.60 m-1.3 0 a1.3 1.3 0 1 0 2.6 0 a1.3 1.3 0 1 0 -2.6 0Z" fill="#d8d8d8" fill-rule="evenodd"/>
<g fill="#d8d8d8"><rect x="173.90" y="384.90" width="5" height="1.3"/><rect x="174.90" y="385.90" width="3" height="4"/><rect x="173.10" y="389.10" width="6.6" height="1.6"/><rect x="175.95" y="390.50" width="0.9" height="2.3"/></g>
<rect x="33" y="395" width="148" height="1" fill="#dcdcdc"/>
<path d="M286.91 383.94 L285.51 382.40 L284.27 380.73 L283.20 378.94 L282.31 377.06 L281.61 375.10 L281.11 373.09 L280.80 371.03 L280.70 368.95 L280.80 366.87 L281.11 364.81 L281.61 362.80 L282.31 360.84 L283.20 358.96 L284.27 357.17 L285.51 355.50 L286.91 353.96 L288.45 352.56 L290.12 351.32 L291.91 350.25 L293.79 349.36 L295.75 348.66 L297.76 348.16 L299.82 347.85 L301.90 347.75 L303.98 347.85 L306.04 348.16 L308.05 348.66 L310.01 349.36 L311.89 350.25 L313.68 351.32 L315.35 352.56 L316.89 353.96 L318.29 355.50 L319.53 357.17 L320.60 358.96 L321.49 360.84 L322.19 362.80 L322.69 364.81 L323.00 366.87 L323.10 368.95 L323.00 371.03 L322.69 373.09 L322.19 375.10 L321.49 377.06 L320.60 378.94 L319.53 380.73 L318.29 382.40 L316.89 383.94 L311.96 379.01 L312.60 377.81 L313.13 376.55 L313.53 375.24 L313.81 373.91 L313.97 372.55 L314.00 371.18 L313.90 369.82 L313.67 368.48 L313.33 367.16 L312.86 365.87 L312.27 364.64 L311.58 363.47 L310.77 362.36 L309.87 361.34 L308.88 360.40 L307.80 359.56 L306.65 358.82 L305.44 358.19 L304.18 357.68 L302.87 357.29 L301.53 357.02 L300.17 356.88 L298.81 356.86 L297.45 356.97 L296.10 357.20 L294.78 357.56 L293.51 358.04 L292.28 358.64 L291.11 359.34 L290.01 360.16 L289.00 361.07 L288.07 362.07 L287.24 363.15 L286.51 364.31 L285.89 365.52 L285.39 366.79 L285.01 368.10 L284.75 369.45 L284.62 370.80 L284.61 372.17 L284.73 373.53 L284.98 374.87 L285.35 376.19 L285.84 377.46 L286.45 378.68 L287.16 379.85 L287.99 380.94 L288.91 381.94 Z" fill="#b7c31b"/>
<polygon points="285.92,354.56 289.25,354.90 289.26,351.56 287.68,349.37 283.92,352.76" fill="#fff"/>
<path d="M284.61 349.92 l1.4 1.2" stroke="#b8b8c8" stroke-width="0.8"/>
<polygon points="282.97,357.73 304.28,369.23 303.33,370.87 282.72,358.17" fill="#666666"/>
<path d="M322.70 388.60 L323.62 389.38 L323.40 390.13 L322.19 390.27 L321.82 390.72 L321.92 391.93 L321.23 392.30 L320.29 391.54 L319.70 391.60 L318.92 392.52 L318.17 392.30 L318.03 391.09 L317.58 390.72 L316.37 390.82 L316.00 390.13 L316.76 389.19 L316.70 388.60 L315.78 387.82 L316.00 387.07 L317.21 386.93 L317.58 386.48 L317.48 385.27 L318.17 384.90 L319.11 385.66 L319.70 385.60 L320.48 384.68 L321.23 384.90 L321.37 386.11 L321.82 386.48 L323.03 386.38 L323.40 387.07 L322.64 388.01 Z M319.70 388.60 m-1.3 0 a1.3 1.3 0 1 0 2.6 0 a1.3 1.3 0 1 0 -2.6 0Z" fill="#d8d8d8" fill-rule="evenodd"/>
<g fill="#d8d8d8"><rect x="327.90" y="384.90" width="5" height="1.3"/><rect x="328.90" y="385.90" width="3" height="4"/><rect x="327.10" y="389.10" width="6.6" height="1.6"/><rect x="329.95" y="390.50" width="0.9" height="2.3"/></g>
<rect x="187" y="395" width="148" height="1" fill="#dcdcdc"/>
<rect x="33" y="322" width="301" height="1" fill="#dcdcdc"/>
<path d="M318.80 314.00 L319.72 314.78 L319.50 315.53 L318.29 315.67 L317.92 316.12 L318.02 317.33 L317.33 317.70 L316.39 316.94 L315.80 317.00 L315.02 317.92 L314.27 317.70 L314.13 316.49 L313.68 316.12 L312.47 316.22 L312.10 315.53 L312.86 314.59 L312.80 314.00 L311.88 313.22 L312.10 312.47 L313.31 312.33 L313.68 311.88 L313.58 310.67 L314.27 310.30 L315.21 311.06 L315.80 311.00 L316.58 310.08 L317.33 310.30 L317.47 311.51 L317.92 311.88 L319.13 311.78 L319.50 312.47 L318.74 313.41 Z M315.80 314.00 m-1.3 0 a1.3 1.3 0 1 0 2.6 0 a1.3 1.3 0 1 0 -2.6 0Z" fill="#d8d8d8" fill-rule="evenodd"/>
<g fill="#d8d8d8"><rect x="325.10" y="310.00" width="5" height="1.3"/><rect x="326.10" y="311.00" width="3" height="4"/><rect x="324.30" y="314.20" width="6.6" height="1.6"/><rect x="327.15" y="315.60" width="0.9" height="2.3"/></g>
</svg>
<div class="abs" style="left:38px;top:117px;font-size:13px;color:#444;-webkit-text-stroke:0.2px #444;line-height:15px">Bytes</div>
<div class="abs" style="left:160px;top:295px;font-size:12px;color:#444;line-height:14px">0 MByte</div>
<div class="abs" style="left:254px;top:295px;font-size:12px;color:#444;line-height:14px">&lt; 0.01 MByte</div>
<div class="abs" style="left:38px;top:304.5px;font-size:13px;font-weight:normal;-webkit-text-stroke:0.2px #444;color:#444;line-height:15px;letter-spacing:-0.12px">&lt; 0.01 MByte</div>
<div class="gt" style="left:345px;top:118.0px">Broadcast Packets Received</div>
<div class="gv" style="left:345px;top:161.5px">0 /sec</div>
<div class="gt" style="left:499px;top:118.0px">Broadcast Packets Sent</div>
<div class="gv" style="left:499px;top:161.5px">10 /sec</div>
<div class="gt" style="left:653px;top:118.0px">Bytes Received</div>
<div class="gv" style="left:653px;top:161.5px">&lt; 0.01 MByte</div>
<div class="gt" style="left:345px;top:191.0px">Bytes Sent</div>
<div class="gv" style="left:345px;top:234.5px">&lt; 0.01 MByte</div>
<div class="gt" style="left:499px;top:191.0px">Directed Packets Received</div>
<div class="gv" style="left:499px;top:234.5px">0 /sec</div>
<div class="gt" style="left:653px;top:191.0px">Directed Packets Sent</div>
<div class="gv" style="left:653px;top:234.5px">0 /sec</div>
<div class="gt" style="left:345px;top:264.0px">Multicast Packets Received</div>
<div class="gv" style="left:345px;top:307.5px">0 /sec</div>
<div class="gt" style="left:499px;top:264.0px">Multicast Packets Sent</div>
<div class="gv" style="left:499px;top:307.5px">7 /sec</div>
<div class="gt" style="left:653px;top:264.0px">Packets</div>
<div class="gv" style="left:653px;top:307.5px">17 /sec</div>
<div class="gt" style="left:38px;top:337.0px">Packets Received</div>
<div class="gv" style="left:38px;top:380.5px">0 /sec</div>
<div class="gt" style="left:192px;top:337.0px">Packets Sent</div>
<div class="gv" style="left:192px;top:380.5px">16 /sec</div>
<div class="th" style="left:58px;top:463px">Channel</div>
<div class="th" style="left:238px;top:463px">ID</div>
<div class="th r" style="left:250px;width:100px;top:463px">Last</div>
<div class="th" style="left:302px;top:478px">Value</div>
<div class="th" style="left:479px;top:463px">Minimum</div>
<div class="th" style="left:678px;top:463px">Maximum</div>
<div class="hl" style="top:496px"></div>
<div class="td" style="left:58px;top:511px">Broadcast Packets Rec…</div>
<div class="td r" style="left:166px;width:100px;top:511px">0</div>
<div class="td r" style="left:250.6px;width:100px;top:511px;letter-spacing:0.4px">0 /sec</div>
<div class="td r" style="left:400.6px;width:150px;top:511px;letter-spacing:0.4px">0 /sec</div>
<div class="td r" style="left:600.6px;width:151px;top:511px;letter-spacing:0.4px">0 /sec</div>
<div class="hl" style="top:529px"></div>
<div class="td" style="left:58px;top:544px">Broadcast Packets Sent</div>
<div class="td r" style="left:166px;width:100px;top:544px">1</div>
<div class="td r" style="left:250.6px;width:100px;top:544px;letter-spacing:0.4px">10 /sec</div>
<div class="td r" style="left:400.6px;width:150px;top:544px;letter-spacing:0.4px">0 /sec</div>
<div class="td r" style="left:600.6px;width:151px;top:544px;letter-spacing:0.4px">51 /sec</div>
<div class="hl" style="top:562px"></div>
<div class="td" style="left:58px;top:577px">Bytes</div>
<div class="td r" style="left:166px;width:100px;top:577px">4</div>
<div class="td" style="left:286px;top:577px;letter-spacing:-0.6px">&lt; 0.01 M…</div>
<div class="td r" style="left:400.0px;width:150px;top:577px">0 MByte</div>
<div class="td r" style="left:600.0px;width:151px;top:577px">&lt; 0.01 MByte</div>
<div class="hl" style="top:595px"></div>
<div class="td" style="left:58px;top:610px">Bytes Received</div>
<div class="td r" style="left:166px;width:100px;top:610px">2</div>
<div class="td" style="left:286px;top:610px;letter-spacing:-0.6px">&lt; 0.01 M…</div>
<div class="td r" style="left:400.0px;width:150px;top:610px">0 MByte</div>
<div class="td r" style="left:600.0px;width:151px;top:610px">&lt; 0.01 MByte</div>
<div class="hl" style="top:628px"></div>
<div class="td" style="left:58px;top:643px">Bytes Sent</div>
<div class="td r" style="left:166px;width:100px;top:643px">3</div>
<div class="td" style="left:286px;top:643px;letter-spacing:-0.6px">&lt; 0.01 M…</div>
<div class="td r" style="left:400.0px;width:150px;top:643px">0 MByte</div>
<div class="td r" style="left:600.0px;width:151px;top:643px">&lt; 0.01 MByte</div>
<div class="hl" style="top:661px"></div>
<div class="td" style="left:58px;top:676px">Directed Packets Receiv…</div>
<div class="td r" style="left:166px;width:100px;top:676px">5</div>
<div class="td r" style="left:250.6px;width:100px;top:676px;letter-spacing:0.4px">0 /sec</div>
<div class="td r" style="left:400.6px;width:150px;top:676px;letter-spacing:0.4px">0 /sec</div>
<div class="td r" style="left:600.6px;width:151px;top:676px;letter-spacing:0.4px">4 /sec</div>
<div class="hl" style="top:694px"></div>
<div class="td" style="left:58px;top:709px">Directed Packets Sent</div>
<div class="td r" style="left:166px;width:100px;top:709px">6</div>
<div class="td r" style="left:250.6px;width:100px;top:709px;letter-spacing:0.4px">0 /sec</div>
<div class="td r" style="left:400.6px;width:150px;top:709px;letter-spacing:0.4px">0 /sec</div>
<div class="td r" style="left:600.6px;width:151px;top:709px;letter-spacing:0.4px">5 /sec</div>
<div class="hl" style="top:727px"></div>
<div class="td" style="left:58px;top:742px">Downtime</div>
<div class="td r" style="left:166px;width:100px;top:742px">-4</div>
<div class="td r" style="left:250.6px;width:100px;top:742px;letter-spacing:0.4px"></div>
<div class="td r" style="left:400.0px;width:150px;top:742px"></div>
<div class="td r" style="left:600.0px;width:151px;top:742px"></div>
<div class="hl" style="top:760px"></div>
<div class="td" style="left:58px;top:775px">Multicast Packets Recei…</div>
<div class="td r" style="left:166px;width:100px;top:775px">7</div>
<div class="td r" style="left:250.6px;width:100px;top:775px;letter-spacing:0.4px">0 /sec</div>
<div class="td r" style="left:400.6px;width:150px;top:775px;letter-spacing:0.4px">0 /sec</div>
<div class="td r" style="left:600.6px;width:151px;top:775px;letter-spacing:0.4px">0 /sec</div>
<div class="hl" style="top:793px"></div>
<div class="td" style="left:58px;top:808px">Multicast Packets Sent</div>
<div class="td r" style="left:166px;width:100px;top:808px">8</div>
<div class="td r" style="left:250.6px;width:100px;top:808px;letter-spacing:0.4px">7 /sec</div>
<div class="td r" style="left:400.6px;width:150px;top:808px;letter-spacing:0.4px">0 /sec</div>
<div class="td r" style="left:600.6px;width:151px;top:808px;letter-spacing:0.4px">17 /sec</div>
<div class="hl" style="top:826px"></div>
<svg class="abs" style="left:0;top:0" width="904" height="832"><path d="M111.2 469.4 h7.7 l-3.85 4z" fill="#1c1c1c"/><path d="M255.7 468.0 l4 -4.2 l4 4.2z M255.7 469.5 l4 4.2 l4 -4.2z" fill="#d0d0d0"/><path d="M340.0 482.8 l4 -4.2 l4 4.2z M340.0 484.3 l4 4.2 l4 -4.2z" fill="#d0d0d0"/><path d="M540.0 468.0 l4 -4.2 l4 4.2z M540.0 469.5 l4 4.2 l4 -4.2z" fill="#d0d0d0"/><path d="M741.0 468.0 l4 -4.2 l4 4.2z M741.0 469.5 l4 4.2 l4 -4.2z" fill="#d0d0d0"/><path d="M826.80 510.29 L827.56 510.35 L827.94 509.74 L829.36 510.32 L829.20 511.03 L829.78 511.52 L830.27 512.10 L830.98 511.94 L831.56 513.36 L830.95 513.74 L831.01 514.50 L830.95 515.26 L831.56 515.64 L830.98 517.06 L830.27 516.90 L829.78 517.48 L829.20 517.97 L829.36 518.68 L827.94 519.26 L827.56 518.65 L826.80 518.71 L826.04 518.65 L825.66 519.26 L824.24 518.68 L824.40 517.97 L823.82 517.48 L823.33 516.90 L822.62 517.06 L822.04 515.64 L822.65 515.26 L822.59 514.50 L822.65 513.74 L822.04 513.36 L822.62 511.94 L823.33 512.10 L823.82 511.52 L824.40 511.03 L824.24 510.32 L825.66 509.74 L826.04 510.35 Z M826.80 514.50 m-1.90 0 a1.90 1.90 0 1 0 3.80 0 a1.90 1.90 0 1 0 -3.80 0Z" fill="#333" fill-rule="evenodd"/><path d="M819.77 518.17 L820.31 517.94 L820.38 517.37 L821.62 517.37 L821.69 517.94 L822.23 518.17 L822.70 518.52 L823.23 518.29 L823.85 519.37 L823.39 519.71 L823.46 520.30 L823.39 520.89 L823.85 521.23 L823.23 522.31 L822.70 522.08 L822.23 522.43 L821.69 522.66 L821.62 523.23 L820.38 523.23 L820.31 522.66 L819.77 522.43 L819.30 522.08 L818.77 522.31 L818.15 521.23 L818.61 520.89 L818.54 520.30 L818.61 519.71 L818.15 519.37 L818.77 518.29 L819.30 518.52 Z M821.00 520.30 m-1.00 0 a1.00 1.00 0 1 0 2.00 0 a1.00 1.00 0 1 0 -2.00 0Z" fill="#333" fill-rule="evenodd"/><path d="M826.80 543.29 L827.56 543.35 L827.94 542.74 L829.36 543.32 L829.20 544.03 L829.78 544.52 L830.27 545.10 L830.98 544.94 L831.56 546.36 L830.95 546.74 L831.01 547.50 L830.95 548.26 L831.56 548.64 L830.98 550.06 L830.27 549.90 L829.78 550.48 L829.20 550.97 L829.36 551.68 L827.94 552.26 L827.56 551.65 L826.80 551.71 L826.04 551.65 L825.66 552.26 L824.24 551.68 L824.40 550.97 L823.82 550.48 L823.33 549.90 L822.62 550.06 L822.04 548.64 L822.65 548.26 L822.59 547.50 L822.65 546.74 L822.04 546.36 L822.62 544.94 L823.33 545.10 L823.82 544.52 L824.40 544.03 L824.24 543.32 L825.66 542.74 L826.04 543.35 Z M826.80 547.50 m-1.90 0 a1.90 1.90 0 1 0 3.80 0 a1.90 1.90 0 1 0 -3.80 0Z" fill="#333" fill-rule="evenodd"/><path d="M819.77 551.17 L820.31 550.94 L820.38 550.37 L821.62 550.37 L821.69 550.94 L822.23 551.17 L822.70 551.52 L823.23 551.29 L823.85 552.37 L823.39 552.71 L823.46 553.30 L823.39 553.89 L823.85 554.23 L823.23 555.31 L822.70 555.08 L822.23 555.43 L821.69 555.66 L821.62 556.23 L820.38 556.23 L820.31 555.66 L819.77 555.43 L819.30 555.08 L818.77 555.31 L818.15 554.23 L818.61 553.89 L818.54 553.30 L818.61 552.71 L818.15 552.37 L818.77 551.29 L819.30 551.52 Z M821.00 553.30 m-1.00 0 a1.00 1.00 0 1 0 2.00 0 a1.00 1.00 0 1 0 -2.00 0Z" fill="#333" fill-rule="evenodd"/><path d="M826.80 576.29 L827.56 576.35 L827.94 575.74 L829.36 576.32 L829.20 577.03 L829.78 577.52 L830.27 578.10 L830.98 577.94 L831.56 579.36 L830.95 579.74 L831.01 580.50 L830.95 581.26 L831.56 581.64 L830.98 583.06 L830.27 582.90 L829.78 583.48 L829.20 583.97 L829.36 584.68 L827.94 585.26 L827.56 584.65 L826.80 584.71 L826.04 584.65 L825.66 585.26 L824.24 584.68 L824.40 583.97 L823.82 583.48 L823.33 582.90 L822.62 583.06 L822.04 581.64 L822.65 581.26 L822.59 580.50 L822.65 579.74 L822.04 579.36 L822.62 577.94 L823.33 578.10 L823.82 577.52 L824.40 577.03 L824.24 576.32 L825.66 575.74 L826.04 576.35 Z M826.80 580.50 m-1.90 0 a1.90 1.90 0 1 0 3.80 0 a1.90 1.90 0 1 0 -3.80 0Z" fill="#333" fill-rule="evenodd"/><path d="M819.77 584.17 L820.31 583.94 L820.38 583.37 L821.62 583.37 L821.69 583.94 L822.23 584.17 L822.70 584.52 L823.23 584.29 L823.85 585.37 L823.39 585.71 L823.46 586.30 L823.39 586.89 L823.85 587.23 L823.23 588.31 L822.70 588.08 L822.23 588.43 L821.69 588.66 L821.62 589.23 L820.38 589.23 L820.31 588.66 L819.77 588.43 L819.30 588.08 L818.77 588.31 L818.15 587.23 L818.61 586.89 L818.54 586.30 L818.61 585.71 L818.15 585.37 L818.77 584.29 L819.30 584.52 Z M821.00 586.30 m-1.00 0 a1.00 1.00 0 1 0 2.00 0 a1.00 1.00 0 1 0 -2.00 0Z" fill="#333" fill-rule="evenodd"/><path d="M826.80 609.29 L827.56 609.35 L827.94 608.74 L829.36 609.32 L829.20 610.03 L829.78 610.52 L830.27 611.10 L830.98 610.94 L831.56 612.36 L830.95 612.74 L831.01 613.50 L830.95 614.26 L831.56 614.64 L830.98 616.06 L830.27 615.90 L829.78 616.48 L829.20 616.97 L829.36 617.68 L827.94 618.26 L827.56 617.65 L826.80 617.71 L826.04 617.65 L825.66 618.26 L824.24 617.68 L824.40 616.97 L823.82 616.48 L823.33 615.90 L822.62 616.06 L822.04 614.64 L822.65 614.26 L822.59 613.50 L822.65 612.74 L822.04 612.36 L822.62 610.94 L823.33 611.10 L823.82 610.52 L824.40 610.03 L824.24 609.32 L825.66 608.74 L826.04 609.35 Z M826.80 613.50 m-1.90 0 a1.90 1.90 0 1 0 3.80 0 a1.90 1.90 0 1 0 -3.80 0Z" fill="#333" fill-rule="evenodd"/><path d="M819.77 617.17 L820.31 616.94 L820.38 616.37 L821.62 616.37 L821.69 616.94 L822.23 617.17 L822.70 617.52 L823.23 617.29 L823.85 618.37 L823.39 618.71 L823.46 619.30 L823.39 619.89 L823.85 620.23 L823.23 621.31 L822.70 621.08 L822.23 621.43 L821.69 621.66 L821.62 622.23 L820.38 622.23 L820.31 621.66 L819.77 621.43 L819.30 621.08 L818.77 621.31 L818.15 620.23 L818.61 619.89 L818.54 619.30 L818.61 618.71 L818.15 618.37 L818.77 617.29 L819.30 617.52 Z M821.00 619.30 m-1.00 0 a1.00 1.00 0 1 0 2.00 0 a1.00 1.00 0 1 0 -2.00 0Z" fill="#333" fill-rule="evenodd"/><path d="M826.80 642.29 L827.56 642.35 L827.94 641.74 L829.36 642.32 L829.20 643.03 L829.78 643.52 L830.27 644.10 L830.98 643.94 L831.56 645.36 L830.95 645.74 L831.01 646.50 L830.95 647.26 L831.56 647.64 L830.98 649.06 L830.27 648.90 L829.78 649.48 L829.20 649.97 L829.36 650.68 L827.94 651.26 L827.56 650.65 L826.80 650.71 L826.04 650.65 L825.66 651.26 L824.24 650.68 L824.40 649.97 L823.82 649.48 L823.33 648.90 L822.62 649.06 L822.04 647.64 L822.65 647.26 L822.59 646.50 L822.65 645.74 L822.04 645.36 L822.62 643.94 L823.33 644.10 L823.82 643.52 L824.40 643.03 L824.24 642.32 L825.66 641.74 L826.04 642.35 Z M826.80 646.50 m-1.90 0 a1.90 1.90 0 1 0 3.80 0 a1.90 1.90 0 1 0 -3.80 0Z" fill="#333" fill-rule="evenodd"/><path d="M819.77 650.17 L820.31 649.94 L820.38 649.37 L821.62 649.37 L821.69 649.94 L822.23 650.17 L822.70 650.52 L823.23 650.29 L823.85 651.37 L823.39 651.71 L823.46 652.30 L823.39 652.89 L823.85 653.23 L823.23 654.31 L822.70 654.08 L822.23 654.43 L821.69 654.66 L821.62 655.23 L820.38 655.23 L820.31 654.66 L819.77 654.43 L819.30 654.08 L818.77 654.31 L818.15 653.23 L818.61 652.89 L818.54 652.30 L818.61 651.71 L818.15 651.37 L818.77 650.29 L819.30 650.52 Z M821.00 652.30 m-1.00 0 a1.00 1.00 0 1 0 2.00 0 a1.00 1.00 0 1 0 -2.00 0Z" fill="#333" fill-rule="evenodd"/><path d="M826.80 675.29 L827.56 675.35 L827.94 674.74 L829.36 675.32 L829.20 676.03 L829.78 676.52 L830.27 677.10 L830.98 676.94 L831.56 678.36 L830.95 678.74 L831.01 679.50 L830.95 680.26 L831.56 680.64 L830.98 682.06 L830.27 681.90 L829.78 682.48 L829.20 682.97 L829.36 683.68 L827.94 684.26 L827.56 683.65 L826.80 683.71 L826.04 683.65 L825.66 684.26 L824.24 683.68 L824.40 682.97 L823.82 682.48 L823.33 681.90 L822.62 682.06 L822.04 680.64 L822.65 680.26 L822.59 679.50 L822.65 678.74 L822.04 678.36 L822.62 676.94 L823.33 677.10 L823.82 676.52 L824.40 676.03 L824.24 675.32 L825.66 674.74 L826.04 675.35 Z M826.80 679.50 m-1.90 0 a1.90 1.90 0 1 0 3.80 0 a1.90 1.90 0 1 0 -3.80 0Z" fill="#333" fill-rule="evenodd"/><path d="M819.77 683.17 L820.31 682.94 L820.38 682.37 L821.62 682.37 L821.69 682.94 L822.23 683.17 L822.70 683.52 L823.23 683.29 L823.85 684.37 L823.39 684.71 L823.46 685.30 L823.39 685.89 L823.85 686.23 L823.23 687.31 L822.70 687.08 L822.23 687.43 L821.69 687.66 L821.62 688.23 L820.38 688.23 L820.31 687.66 L819.77 687.43 L819.30 687.08 L818.77 687.31 L818.15 686.23 L818.61 685.89 L818.54 685.30 L818.61 684.71 L818.15 684.37 L818.77 683.29 L819.30 683.52 Z M821.00 685.30 m-1.00 0 a1.00 1.00 0 1 0 2.00 0 a1.00 1.00 0 1 0 -2.00 0Z" fill="#333" fill-rule="evenodd"/><path d="M826.80 708.29 L827.56 708.35 L827.94 707.74 L829.36 708.32 L829.20 709.03 L829.78 709.52 L830.27 710.10 L830.98 709.94 L831.56 711.36 L830.95 711.74 L831.01 712.50 L830.95 713.26 L831.56 713.64 L830.98 715.06 L830.27 714.90 L829.78 715.48 L829.20 715.97 L829.36 716.68 L827.94 717.26 L827.56 716.65 L826.80 716.71 L826.04 716.65 L825.66 717.26 L824.24 716.68 L824.40 715.97 L823.82 715.48 L823.33 714.90 L822.62 715.06 L822.04 713.64 L822.65 713.26 L822.59 712.50 L822.65 711.74 L822.04 711.36 L822.62 709.94 L823.33 710.10 L823.82 709.52 L824.40 709.03 L824.24 708.32 L825.66 707.74 L826.04 708.35 Z M826.80 712.50 m-1.90 0 a1.90 1.90 0 1 0 3.80 0 a1.90 1.90 0 1 0 -3.80 0Z" fill="#333" fill-rule="evenodd"/><path d="M819.77 716.17 L820.31 715.94 L820.38 715.37 L821.62 715.37 L821.69 715.94 L822.23 716.17 L822.70 716.52 L823.23 716.29 L823.85 717.37 L823.39 717.71 L823.46 718.30 L823.39 718.89 L823.85 719.23 L823.23 720.31 L822.70 720.08 L822.23 720.43 L821.69 720.66 L821.62 721.23 L820.38 721.23 L820.31 720.66 L819.77 720.43 L819.30 720.08 L818.77 720.31 L818.15 719.23 L818.61 718.89 L818.54 718.30 L818.61 717.71 L818.15 717.37 L818.77 716.29 L819.30 716.52 Z M821.00 718.30 m-1.00 0 a1.00 1.00 0 1 0 2.00 0 a1.00 1.00 0 1 0 -2.00 0Z" fill="#333" fill-rule="evenodd"/><path d="M826.80 741.29 L827.56 741.35 L827.94 740.74 L829.36 741.32 L829.20 742.03 L829.78 742.52 L830.27 743.10 L830.98 742.94 L831.56 744.36 L830.95 744.74 L831.01 745.50 L830.95 746.26 L831.56 746.64 L830.98 748.06 L830.27 747.90 L829.78 748.48 L829.20 748.97 L829.36 749.68 L827.94 750.26 L827.56 749.65 L826.80 749.71 L826.04 749.65 L825.66 750.26 L824.24 749.68 L824.40 748.97 L823.82 748.48 L823.33 747.90 L822.62 748.06 L822.04 746.64 L822.65 746.26 L822.59 745.50 L822.65 744.74 L822.04 744.36 L822.62 742.94 L823.33 743.10 L823.82 742.52 L824.40 742.03 L824.24 741.32 L825.66 740.74 L826.04 741.35 Z M826.80 745.50 m-1.90 0 a1.90 1.90 0 1 0 3.80 0 a1.90 1.90 0 1 0 -3.80 0Z" fill="#333" fill-rule="evenodd"/><path d="M819.77 749.17 L820.31 748.94 L820.38 748.37 L821.62 748.37 L821.69 748.94 L822.23 749.17 L822.70 749.52 L823.23 749.29 L823.85 750.37 L823.39 750.71 L823.46 751.30 L823.39 751.89 L823.85 752.23 L823.23 753.31 L822.70 753.08 L822.23 753.43 L821.69 753.66 L821.62 754.23 L820.38 754.23 L820.31 753.66 L819.77 753.43 L819.30 753.08 L818.77 753.31 L818.15 752.23 L818.61 751.89 L818.54 751.30 L818.61 750.71 L818.15 750.37 L818.77 749.29 L819.30 749.52 Z M821.00 751.30 m-1.00 0 a1.00 1.00 0 1 0 2.00 0 a1.00 1.00 0 1 0 -2.00 0Z" fill="#333" fill-rule="evenodd"/><path d="M826.80 774.29 L827.56 774.35 L827.94 773.74 L829.36 774.32 L829.20 775.03 L829.78 775.52 L830.27 776.10 L830.98 775.94 L831.56 777.36 L830.95 777.74 L831.01 778.50 L830.95 779.26 L831.56 779.64 L830.98 781.06 L830.27 780.90 L829.78 781.48 L829.20 781.97 L829.36 782.68 L827.94 783.26 L827.56 782.65 L826.80 782.71 L826.04 782.65 L825.66 783.26 L824.24 782.68 L824.40 781.97 L823.82 781.48 L823.33 780.90 L822.62 781.06 L822.04 779.64 L822.65 779.26 L822.59 778.50 L822.65 777.74 L822.04 777.36 L822.62 775.94 L823.33 776.10 L823.82 775.52 L824.40 775.03 L824.24 774.32 L825.66 773.74 L826.04 774.35 Z M826.80 778.50 m-1.90 0 a1.90 1.90 0 1 0 3.80 0 a1.90 1.90 0 1 0 -3.80 0Z" fill="#333" fill-rule="evenodd"/><path d="M819.77 782.17 L820.31 781.94 L820.38 781.37 L821.62 781.37 L821.69 781.94 L822.23 782.17 L822.70 782.52 L823.23 782.29 L823.85 783.37 L823.39 783.71 L823.46 784.30 L823.39 784.89 L823.85 785.23 L823.23 786.31 L822.70 786.08 L822.23 786.43 L821.69 786.66 L821.62 787.23 L820.38 787.23 L820.31 786.66 L819.77 786.43 L819.30 786.08 L818.77 786.31 L818.15 785.23 L818.61 784.89 L818.54 784.30 L818.61 783.71 L818.15 783.37 L818.77 782.29 L819.30 782.52 Z M821.00 784.30 m-1.00 0 a1.00 1.00 0 1 0 2.00 0 a1.00 1.00 0 1 0 -2.00 0Z" fill="#333" fill-rule="evenodd"/><path d="M826.80 807.29 L827.56 807.35 L827.94 806.74 L829.36 807.32 L829.20 808.03 L829.78 808.52 L830.27 809.10 L830.98 808.94 L831.56 810.36 L830.95 810.74 L831.01 811.50 L830.95 812.26 L831.56 812.64 L830.98 814.06 L830.27 813.90 L829.78 814.48 L829.20 814.97 L829.36 815.68 L827.94 816.26 L827.56 815.65 L826.80 815.71 L826.04 815.65 L825.66 816.26 L824.24 815.68 L824.40 814.97 L823.82 814.48 L823.33 813.90 L822.62 814.06 L822.04 812.64 L822.65 812.26 L822.59 811.50 L822.65 810.74 L822.04 810.36 L822.62 808.94 L823.33 809.10 L823.82 808.52 L824.40 808.03 L824.24 807.32 L825.66 806.74 L826.04 807.35 Z M826.80 811.50 m-1.90 0 a1.90 1.90 0 1 0 3.80 0 a1.90 1.90 0 1 0 -3.80 0Z" fill="#333" fill-rule="evenodd"/><path d="M819.77 815.17 L820.31 814.94 L820.38 814.37 L821.62 814.37 L821.69 814.94 L822.23 815.17 L822.70 815.52 L823.23 815.29 L823.85 816.37 L823.39 816.71 L823.46 817.30 L823.39 817.89 L823.85 818.23 L823.23 819.31 L822.70 819.08 L822.23 819.43 L821.69 819.66 L821.62 820.23 L820.38 820.23 L820.31 819.66 L819.77 819.43 L819.30 819.08 L818.77 819.31 L818.15 818.23 L818.61 817.89 L818.54 817.30 L818.61 816.71 L818.15 816.37 L818.77 815.29 L819.30 815.52 Z M821.00 817.30 m-1.00 0 a1.00 1.00 0 1 0 2.00 0 a1.00 1.00 0 1 0 -2.00 0Z" fill="#333" fill-rule="evenodd"/></svg>
</body></html>
